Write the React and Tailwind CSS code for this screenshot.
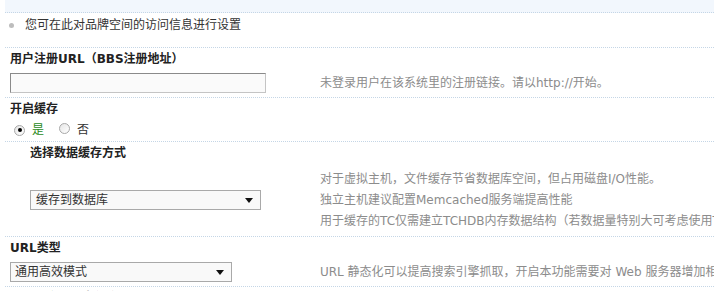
import React from "react";

const Radio = ({ checked }) => (
  <span className="relative inline-flex w-[11px] h-[11px] rounded-full border border-[#a8a8a8] bg-gradient-to-br from-[#e6e6e6] to-white items-center justify-center">
    {checked && <span className="w-[4px] h-[4px] rounded-full bg-black" />}
  </span>
);

const Select = ({ value, w, pad }) => (
  <div className={`${w} h-[20px] box-border border border-[#a9a9a9] bg-[#f9f9f9] flex items-center justify-between ${pad} pr-[7px] text-[#333]`}>
    <span className="leading-[18px]">{value}</span>
    <svg width="8" height="5" viewBox="0 0 8 5"><path d="M0 0H8L4 5Z" fill="#111" /></svg>
  </div>
);

export default function App() {
  const valueRow = "flex box-border border-b border-dotted border-[#c5d6e6]";
  return (
    <div className="w-[714px] h-[291px] overflow-hidden bg-white text-[12px] text-[#333] font-['DejaVu_Sans','Noto_Sans_CJK_SC',sans-serif]">
      <div className="ml-[5px]">
        <div className="h-[13px] bg-[#f2f7fd] box-border border-b border-dotted border-[#c5d6e6]" />
        <div className={`${valueRow} h-[35px] pt-[4px]`}>
          <div className="flex items-center h-[17px] leading-[17px]">
            <span className="ml-[4px] w-[5px] h-[5px] rounded-full bg-[#bdbdbd]" />
            <span className="ml-[11px]">您可在此对品牌空间的访问信息进行设置</span>
          </div>
        </div>

        <div className="h-[21px] flex items-center pl-[5px] font-bold text-[#222]">用户注册URL（BBS注册地址）</div>
        <div className={`${valueRow} h-[29px] items-center`}>
          <div className="w-[315px] pl-[5px]">
            <div className="w-[256px] h-[20px] box-border border border-t-[#8a8a8a] border-l-[#8a8a8a] border-b-[#c4c4c4] border-r-[#c4c4c4] bg-[#fafafa]" />
          </div>
          <div className="text-[#8c8c8c] whitespace-nowrap">未登录用户在该系统里的注册链接。请以http://开始。</div>
        </div>

        <div className="h-[21px] flex items-center pl-[5px] font-bold text-[#222]">开启缓存</div>
        <div className={`${valueRow} h-[23px] items-center pl-[9px]`}>
          <Radio checked />
          <span className="ml-[7px] text-[#2a8a1a]">是</span>
          <span className="ml-[15px]"><Radio /></span>
          <span className="ml-[7px]">否</span>
        </div>

        <div className="h-[22px] flex items-center pl-[25px] font-bold text-[#222]">选择数据缓存方式</div>
        <div className={`${valueRow} h-[73px] items-center`}>
          <div className="w-[315px] pl-[25px]">
            <Select value="缓存到数据库" w="w-[231px]" pad="pl-[5px]" />
          </div>
          <div className="flex-1 min-w-0 overflow-hidden whitespace-nowrap text-[#8c8c8c] leading-[21px]">
            <div>对于虚拟主机，文件缓存节省数据库空间，但占用磁盘I/O性能。</div>
            <div>独立主机建议配置Memcached服务端提高性能</div>
            <div>用于缓存的TC仅需建立TCHDB内存数据结构（若数据量特别大可考虑使用TCBDB）</div>
          </div>
        </div>

        <div className="h-[21px] flex items-center pl-[5px] font-bold text-[#222]">URL类型</div>
        <div className={`${valueRow} h-[29px] items-center`}>
          <div className="w-[315px] pl-[5px]">
            <Select value="通用高效模式" w="w-[222px]" pad="pl-[4px]" />
          </div>
          <div className="flex-1 min-w-0 overflow-hidden whitespace-nowrap text-[#8c8c8c]">URL 静态化可以提高搜索引擎抓取，开启本功能需要对 Web 服务器增加相应的 Rewrite 规则</div>
        </div>

        <div className="h-[21px] flex items-center pl-[5px] font-bold text-[#222]">启用内容页静态化应用</div>
      </div>
    </div>
  );
}
